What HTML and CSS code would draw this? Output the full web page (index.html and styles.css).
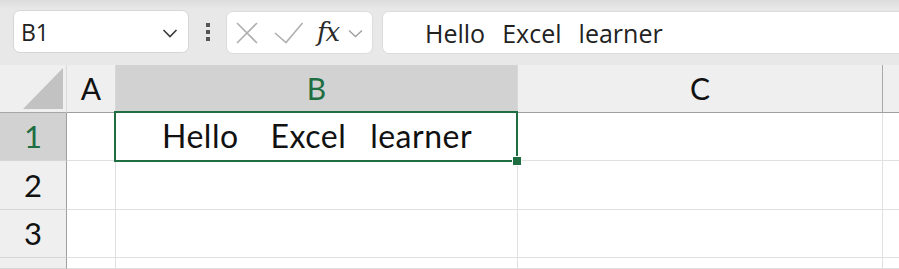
FILE: index.html
```html
<!DOCTYPE html>
<html>
<head>
<meta charset="utf-8">
<link rel="stylesheet" href="styles.css">
</head>
<body>
<div class="toolbar">
  <div class="namebox">
    <span class="name">B1</span>
    <svg class="chev" width="16" height="10" viewBox="0 0 16 10"><polyline points="1.5,2 8,8.5 14.5,2" fill="none" stroke="#3a3a3a" stroke-width="1.6"/></svg>
  </div>
  <div class="dots"><i></i><i></i><i></i></div>
  <div class="fxbox">
    <svg class="xicon" width="24" height="24" viewBox="0 0 24 24"><path d="M2 2 L22 22 M22 2 L2 22" stroke="#b0b0b0" stroke-width="1.6" fill="none"/></svg>
    <svg class="check" width="30" height="22" viewBox="0 0 30 22"><polyline points="1,11 12,20.5 28.5,1" fill="none" stroke="#b0b0b0" stroke-width="1.6"/></svg>
    <span class="fx">fx</span>
    <svg class="chev2" width="15" height="9" viewBox="0 0 15 9"><polyline points="1,1.5 7.5,7.5 14,1.5" fill="none" stroke="#a0a0a0" stroke-width="1.4"/></svg>
  </div>
  <div class="formula"><span class="ftext">Hello   Excel   learner</span></div>
</div>
<div class="sheet">
  <div class="grid">
    <div class="corner"><svg width="40" height="41" viewBox="0 0 40 41"><polygon points="0,41 40,41 40,0" fill="#c2c2c2"/></svg></div>
    <div class="colhead">A</div>
    <div class="colhead sel">B</div>
    <div class="colhead">C</div>
    <div class="colhead rest"></div>

    <div class="rowhead sel">1</div>
    <div class="cell"></div>
    <div class="cell b1"><span class="ctext">Hello    Excel   learner</span></div>
    <div class="cell"></div>
    <div class="cell rest"></div>

    <div class="rowhead">2</div>
    <div class="cell"></div>
    <div class="cell"></div>
    <div class="cell"></div>
    <div class="cell rest"></div>

    <div class="rowhead">3</div>
    <div class="cell"></div>
    <div class="cell"></div>
    <div class="cell"></div>
    <div class="cell rest"></div>

    <div class="rowhead"></div>
    <div class="cell"></div>
    <div class="cell"></div>
    <div class="cell"></div>
    <div class="cell rest"></div>
  </div>
  <div class="selection"><div class="handle"></div></div>
</div>
</body>
</html>
```

FILE: styles.css
```css
* { box-sizing: border-box; }
html, body {
  margin: 0;
  padding: 0;
  width: 899px;
  height: 269px;
  overflow: hidden;
  background: #ffffff;
  font-family: "Open Sans", "Noto Sans", sans-serif;
}

.toolbar {
  height: 65px;
  display: flex;
  align-items: flex-start;
  padding: 10px 0 0 13px;
  background: linear-gradient(#dcdcdc 0px, #e8e8e8 9px, #e8e8e8 100%);
  overflow: hidden;
}

.namebox {
  width: 176px;
  height: 43px;
  background: #fff;
  border: 1px solid #d6d6d6;
  border-radius: 7px;
  display: flex;
  align-items: center;
  justify-content: space-between;
  padding: 0 10px 0 7px;
}
.name {
  font-size: 23px;
  color: #222;
}
.chev { margin-top: 2px; }

.dots {
  width: 37px;
  height: 43px;
  display: flex;
  flex-direction: column;
  align-items: center;
  justify-content: center;
  gap: 3px;
}
.dots i {
  display: block;
  width: 4px;
  height: 4px;
  background: #555;
}

.fxbox {
  width: 147px;
  height: 43px;
  margin-top: 1px;
  background: #fff;
  border: 1px solid #dcdcdc;
  border-radius: 7px;
  display: flex;
  align-items: center;
  padding-left: 8px;
}
.check { margin-left: 15px; margin-top: 1px; }
.fx {
  font-family: "DejaVu Serif", "Liberation Serif", serif;
  font-style: italic;
  font-size: 26px;
  color: #2a2a2a;
  margin-left: 13px;
  letter-spacing: -1px;
  margin-top: -2px;
}
.chev2 { margin-left: 9px; margin-top: 1px; }

.formula {
  flex: 1;
  height: 43px;
  margin-top: 1px;
  margin-left: 9px;
  margin-right: -20px;
  background: #fff;
  border: 1px solid #dcdcdc;
  border-radius: 7px 0 0 7px;
  display: flex;
  align-items: center;
  padding-left: 42px;
}
.ftext {
  white-space: pre;
  font-size: 25px;
  color: #222;
  word-spacing: -0.8px;
}

.sheet {
  position: relative;
}
.grid {
  display: grid;
  grid-template-columns: 67px 49px 402px 365px 1fr;
  grid-template-rows: 48px 48px 49px 48px 11px;
  font-family: "Lato", "Open Sans", sans-serif;
}
.corner {
  background: #efefef;
  border-right: 1px solid #dadada;
  border-bottom: 1px solid #a6a6a6;
  display: flex;
  align-items: flex-end;
  justify-content: flex-end;
  padding: 0 3px 3px 0;
}
.corner svg { display: block; }

.colhead {
  background: #efefef;
  border-right: 1px solid #d8d8d8;
  border-bottom: 1px solid #9f9f9f;
  display: flex;
  align-items: flex-end;
  justify-content: center;
  font-size: 30px;
  line-height: 1;
  padding-bottom: 9px;
  color: #111;
}
.colhead.sel {
  background: #d2d2d2;
  color: #1e6e42;
}
.colhead:nth-child(4) { border-right-color: #a8a8a8; }
.colhead.rest { border-right: none; }

.rowhead {
  background: #efefef;
  border-right: 1px solid #9f9f9f;
  border-bottom: 1px solid #d6d6d6;
  display: flex;
  align-items: flex-end;
  justify-content: center;
  font-size: 31px;
  line-height: 1;
  padding-bottom: 8px;
  color: #111;
}
.rowhead.sel {
  background: #d2d2d2;
  color: #1e6e42;
}

.cell {
  border-right: 1px solid #e0e0e0;
  border-bottom: 1px solid #e0e0e0;
}
.cell.rest { border-right: none; }
.b1 {
  display: flex;
  align-items: flex-end;
  padding: 0 0 8px 46px;
}
.ctext {
  white-space: pre;
  font-size: 32px;
  line-height: 1;
  color: #111;
  letter-spacing: 0.5px;
  word-spacing: -0.7px;
}

.selection {
  position: absolute;
  left: 114px;
  top: 46px;
  width: 404px;
  height: 51px;
  border: 2px solid #1e6e42;
}
.handle {
  position: absolute;
  right: -5px;
  bottom: -5px;
  width: 8px;
  height: 8px;
  background: #1e6e42;
  outline: 1px solid #fff;
}
```
